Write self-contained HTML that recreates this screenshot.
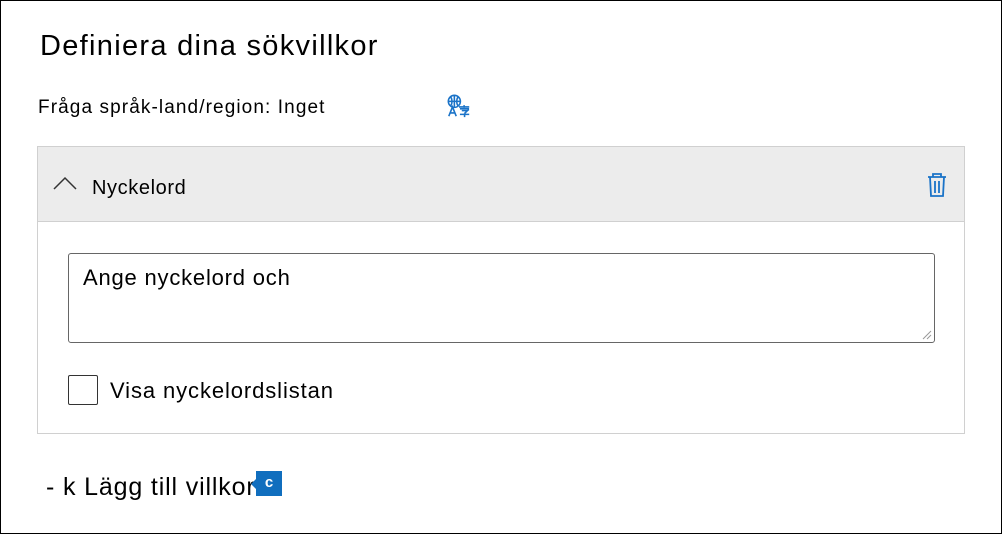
<!DOCTYPE html>
<html><head><style>
body{margin:0;width:1002px;height:534px;overflow:hidden;background:#fff;font-family:"Liberation Sans",sans-serif;color:#000}
.frame{position:absolute;left:0;top:0;width:1000px;height:532px;border:1px solid #000}
.a{position:absolute;white-space:nowrap}
</style></head><body>
<div class="a" style="left:0;top:0;width:1000px;height:532px;border:1px solid #000"></div>
<div class="a" style="left:40px;top:30px;font-size:29px;letter-spacing:1.3px">Definiera dina sökvillkor</div>
<div class="a" style="left:38px;top:97px;font-size:19px;letter-spacing:1.1px">Fråga språk-land/region: Inget</div>
<svg class="a" style="left:446px;top:93px" width="26" height="26" viewBox="0 0 28 26" fill="none" stroke="#1a73c8" stroke-width="1.7">
<circle cx="9" cy="8" r="6.5"/><path d="M2.5 8h13M9 1.5v13M5 3c2 3 2 7 0 10M13 3c-2 3-2 7 0 10"/>
<path d="M3 24l4-10 4 10M4.5 20.5h5"/>
<path d="M14 14h11M19.5 12v3M15 16h9v2M17 18h6l-3 3M20 21v4M15 22h10"/>
</svg>
<div class="a" style="left:37px;top:146px;width:926px;height:286px;border:1px solid #d0d0d0"></div>
<div class="a" style="left:38px;top:147px;width:926px;height:74px;background:#ececec;border-bottom:1px solid #d0d0d0"></div>
<svg class="a" style="left:53px;top:176px" width="24" height="14"><path d="M1 13L12 2l11 11" stroke="#333" stroke-width="1.5" fill="none"/></svg>
<div class="a" style="left:92px;top:177px;font-size:20px;letter-spacing:0.6px">Nyckelord</div>
<svg class="a" style="left:926px;top:172px" width="22" height="26" viewBox="0 0 22 26" fill="none" stroke="#1a73c8" stroke-width="1.8">
<path d="M2 5h18M7 5V2h8v3M4 5l1 19h12l1-19M9 9v12M13 9v12"/></svg>
<div class="a" style="left:68px;top:253px;width:865px;height:88px;border:1px solid #666;border-radius:3px"></div>
<div class="a" style="left:83px;top:265px;font-size:22px;letter-spacing:0.8px">Ange nyckelord och</div>
<svg class="a" style="left:922px;top:330px" width="10" height="10"><path d="M9 1L1 9M9 5L5 9" stroke="#999"/></svg>
<div class="a" style="left:68px;top:375px;width:28px;height:28px;border:1px solid #333;border-radius:2px"></div>
<div class="a" style="left:110px;top:378px;font-size:22px;letter-spacing:0.9px">Visa nyckelordslistan</div>
<div class="a" style="left:46px;top:473px;font-size:25px;letter-spacing:0.85px">- k Lägg till villkor</div>
<div class="a" style="left:256px;top:471px;width:26px;height:25px;background:#106ebe;color:#fff;font-size:15px;font-weight:bold;text-align:center;line-height:24px">c</div>
<div class="a" style="left:251px;top:478px;width:0;height:0;border-top:6px solid transparent;border-bottom:6px solid transparent;border-right:6px solid #106ebe"></div>
</body></html>
